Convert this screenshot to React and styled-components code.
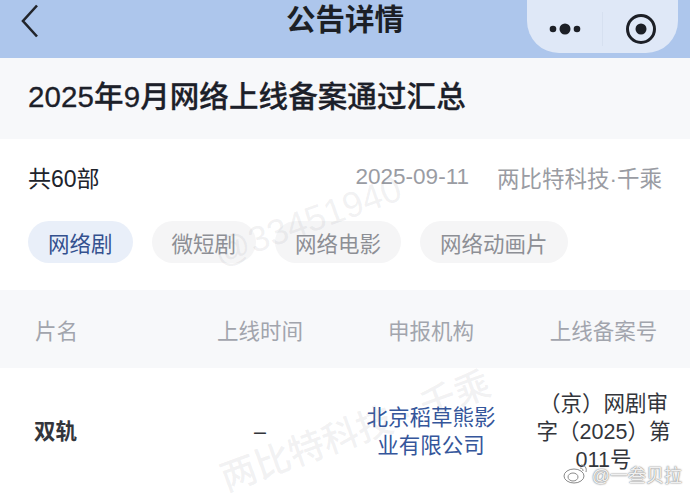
import React from 'react';
import styled, { createGlobalStyle } from 'styled-components';

const Global = createGlobalStyle`
  html, body { margin: 0; padding: 0; background: #fff; }
  body { font-family: "Liberation Sans", "Noto Sans CJK SC", sans-serif; }
  * { box-sizing: border-box; }
`;
const Page = styled.div`
  position: relative; width: 690px; height: 495px; overflow: hidden; background: #fff;
`;
const Nav = styled.header`
  height: 58px; background: #adc6ec; display: grid; grid-template-columns: 1fr auto 1fr; align-items: center; position: relative;
`;
const Back = styled.div`
  padding-left: 21px; display: flex; align-items: center; height: 100%; margin-top: -16px;
`;
const NavTitle = styled.h1`
  margin: 0 0 18px; font-size: 29.5px; line-height: 40px; font-weight: 700; color: #1c1f26; -webkit-text-stroke: 0;
`;
const Capsule = styled.div`
  justify-self: end; margin: -21px 12px 0 0; width: 151px; height: 68px; border-radius: 0 0 34px 34px / 0 0 34px 34px;
  background: #dfe8f7; display: flex; align-items: center; border-bottom-left-radius: 32px; border-bottom-right-radius: 32px;
  padding-top: 21px; box-sizing: border-box; height: 68px;
`;
const CapCell = styled.div`
  flex: 1; display: flex; align-items: center; justify-content: center; height: 34px;
  &:first-child { border-right: 1px solid #d6e0f0; }
`;
const TitleBar = styled.section`
  height: 81px; background: #f7f8fa; display: flex; align-items: center; padding: 0 0 3px 28px;
`;
const Title = styled.h2`
  margin: 0; font-size: 29.5px; font-weight: 500; color: #1c2029; line-height: 40px; letter-spacing: 0.1px;
  -webkit-text-stroke: 0.3px #1c2029;
`;
const Meta = styled.div`
  display: flex; align-items: center; height: 76px; padding: 0 28px;
`;
const Count = styled.span`
  font-size: 23px; color: #20232b; margin-right: auto;
`;
const MetaText = styled.span`
  font-size: 22.5px; color: #9a9ca3; margin-left: ${p => p.$gap || 0}px;
`;
const Tabs = styled.nav`
  display: flex; gap: 19px; padding: 6px 28px 0; height: 75px;
`;
const Tab = styled.span`
  height: 42px; padding: 0 ${p => p.$pad || 20}px; border-radius: 21px; display: flex; align-items: center;
  font-size: 21.5px; background: ${p => p.$active ? '#e9eff9' : '#f5f5f6'}; color: ${p => p.$active ? '#34518f' : '#8d8f95'};
`;
const Table = styled.div`
  display: grid; grid-template-columns: 175px 170px 172px 173px;
`;
const HeadCell = styled.div`
  height: 78px; background: #f7f8fa; color: #a2a5ad; font-size: 21.5px; display: flex; align-items: center;
  justify-content: ${p => p.$left ? 'flex-start' : 'center'}; padding-left: ${p => p.$left ? 35 : 0}px;
`;
const Cell = styled.div`
  height: 127px; display: flex; align-items: center; font-size: 21.5px; line-height: 28px; text-align: center;
  justify-content: ${p => p.$left ? 'flex-start' : 'center'}; padding-left: ${p => p.$left ? 34 : 0}px;
  color: ${p => p.$link ? '#35569b' : '#33353b'}; font-weight: ${p => p.$bold ? 700 : 400};
`;
const Wrap = styled.div`
  width: ${p => p.$w}px; margin-top: ${p => p.$top || 0}px;
`;
const Mark = styled.div`
  position: absolute; left: ${p => p.$x}px; top: ${p => p.$y}px; transform: rotate(-20deg); transform-origin: left top;
  font-size: ${p => p.$size}px; color: rgba(120,125,135,0.1); white-space: nowrap; font-weight: 500; pointer-events: none;
`;
const Weibo = styled.div`
  position: absolute; right: 8px; bottom: 8px; display: flex; align-items: center; gap: 2px;
  font-size: 18px; color: rgba(255,255,255,.9); text-shadow: 0 0 2px #888, 0 0 1px #777;
`;

export default function App() {
  return (
    <Page>
      <Global />
      <Nav>
        <Back>
          <svg width="18" height="34" viewBox="0 0 18 34" fill="none"><path d="M16 1.500 L2 17 L16 32.500" stroke="#22252b" strokeWidth="2.600" /></svg>
        </Back>
        <NavTitle>公告详情</NavTitle>
        <Capsule>
          <CapCell>
            <svg width="36" height="14" viewBox="0 0 36 14"><circle cx="6" cy="7" r="3.300" fill="#1c1f26" /><circle cx="18" cy="7" r="5.500" fill="#1c1f26" /><circle cx="30" cy="7" r="3.300" fill="#1c1f26" /></svg>
          </CapCell>
          <CapCell>
            <svg width="32" height="32" viewBox="0 0 32 32"><circle cx="16" cy="16" r="13.500" fill="none" stroke="#1c1f26" strokeWidth="3" /><circle cx="16" cy="16" r="5.500" fill="#1c1f26" /></svg>
          </CapCell>
        </Capsule>
      </Nav>
      <TitleBar><Title>2025年9月网络上线备案通过汇总</Title></TitleBar>
      <Meta>
        <Count>共60部</Count>
        <MetaText>2025-09-11</MetaText>
        <MetaText $gap={28}>两比特科技·千乘</MetaText>
      </Meta>
      <Tabs>
        <Tab $active>网络剧</Tab>
        <Tab>微短剧</Tab>
        <Tab>网络电影</Tab>
        <Tab>网络动画片</Tab>
      </Tabs>
      <Table>
        <HeadCell $left>片名</HeadCell>
        <HeadCell>上线时间</HeadCell>
        <HeadCell>申报机构</HeadCell>
        <HeadCell>上线备案号</HeadCell>
        <Cell $left $bold>双轨</Cell>
        <Cell>–</Cell>
        <Cell $link><Wrap $w={135}>北京稻草熊影业有限公司</Wrap></Cell>
        <Cell><Wrap $w={146}>（京）网剧审字（2025）第011号</Wrap></Cell>
      </Table>
      <Mark $x={208} $y={235} $size={36}>@33451940</Mark>
      <Mark $x={212} $y={452} $size={36}>两比特科技 · 千乘</Mark>
      <Weibo>
        <svg width="28" height="24" viewBox="0 0 28 24" fill="none" stroke="#8a8a8a"><ellipse cx="12" cy="14" rx="10" ry="7" /><ellipse cx="11" cy="15" rx="5" ry="4" /><path d="M19 3c4 0 6 3 5 7M18 6c2 0 3 1 3 3" /></svg>
        <span>@一叁贝拉</span>
      </Weibo>
    </Page>
  );
}
